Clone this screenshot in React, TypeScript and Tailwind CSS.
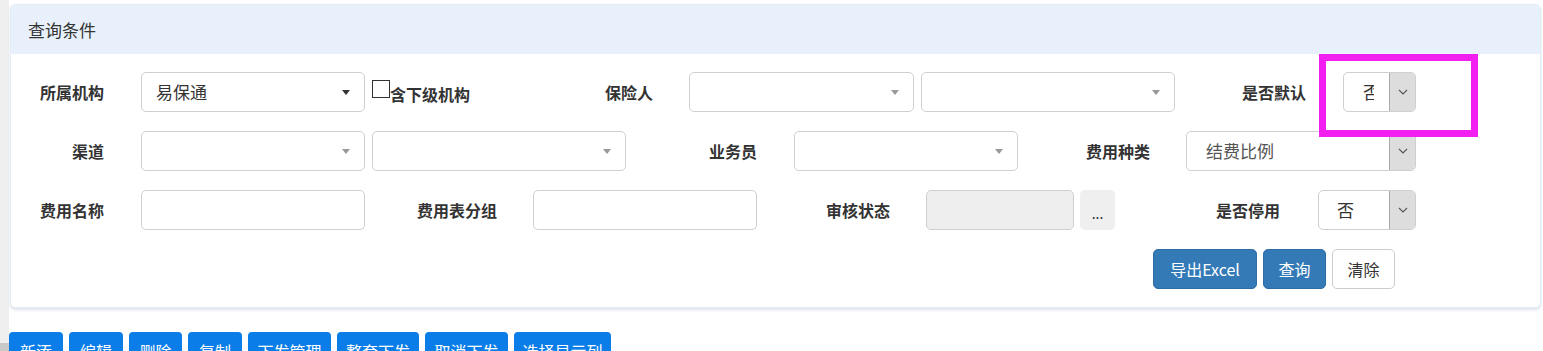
const font = {fontFamily: '"Noto Sans CJK SC", "Liberation Sans", sans-serif'};

const Label = ({text, w}: { text: string; w: string }) => (
    <div className={`${w} shrink-0 text-right text-[16px] font-bold text-[#333]`}>{text}</div>
);

// select2 style box with little triangle
const Select2 = ({w, value, ml, dark}: { w: string; value?: string; ml: string; dark?: boolean }) => (
    <div
        className={`${w} ${ml} shrink-0 h-[40px] flex items-center justify-between border border-[#cfcfcf] rounded-[5px] bg-white pl-[14px] pr-[14px]`}>
        <span className="text-[17px] text-[#333]">{value}</span>
        <span
            className={`w-0 h-0 border-l-[4px] border-r-[4px] border-t-[5px] border-l-transparent border-r-transparent ${dark ? "border-t-[#333]" : "border-t-[#999]"}`}/>
    </div>
);

const Chevron = () => (
    <svg width="10" height="6" viewBox="0 0 10 6" fill="none">
        <polyline points="1,1 5,5 9,1" stroke="#555" strokeWidth="1.1"/>
    </svg>
);

// native select look with grey arrow area
const NativeSelect = ({w, value, ml, pl, clip, color}: {
    w: string;
    value: string;
    ml: string;
    pl: string;
    clip?: boolean;
    color?: string
}) => (
    <div
        className={`${w} ${ml} shrink-0 h-[40px] flex border border-[#cfcfcf] rounded-[5px] bg-white overflow-hidden`}>
        <div className={`flex-1 flex items-center ${pl}`}>
            <span
                className={`text-[17px] ${color ?? "text-[#333]"} ${clip ? "w-[11px] overflow-hidden whitespace-nowrap" : ""}`}>
                {value}
            </span>
        </div>
        <div className="w-[26px] h-full bg-[#dddddd] border-l border-[#aaaaaa] flex items-center justify-center">
            <Chevron/>
        </div>
    </div>
);

const TextInput = ({w, ml, disabled}: { w: string; ml: string; disabled?: boolean }) => (
    <div
        className={`${w} ${ml} shrink-0 h-[40px] border border-[#cfcfcf] rounded-[5px] ${disabled ? "bg-[#eeeeee]" : "bg-white"}`}/>
);

const toolbarBtns = [
    {label: "新添", w: "w-[54px]"},
    {label: "编辑", w: "w-[54px]"},
    {label: "删除", w: "w-[53px]"},
    {label: "复制", w: "w-[54px]"},
    {label: "下发管理", w: "w-[83px]"},
    {label: "整套下发", w: "w-[82px]"},
    {label: "取消下发", w: "w-[83px]"},
    {label: "选择显示列", w: "w-[97px]"},
];

export default function App() {
    return (
        <div className="relative flex h-[351px] w-full overflow-hidden bg-white" style={font}>
            {/* left grey strip */}
            <div className="w-[9px] shrink-0 bg-[#efefef] flex flex-col justify-end">
                <div className="h-[8px] bg-[#c9c9c9]"/>
            </div>

            <div className="flex-1 pt-[4px]">
                {/* search panel */}
                <div
                    className="ml-[1px] mr-[2px] rounded-[5px] border border-[#e3ebf3] bg-white shadow-[0_2px_3px_rgba(200,210,225,0.6)] overflow-hidden">
                    <div className="h-[49px] bg-[#e8f1fb] flex items-center pl-[17px]">
                        <span className="text-[17px] text-[#333]">查询条件</span>
                    </div>

                    <div className="pt-[18px] pb-[18px] flex flex-col gap-[19px]">
                        {/* row 1 */}
                        <div className="flex items-center h-[40px]">
                            <Label text="所属机构" w="w-[93px]"/>
                            <Select2 w="w-[224px]" ml="ml-[37px]" value="易保通" dark/>
                            <div className="ml-[7px] w-[103px] shrink-0 flex items-start h-[24px]">
                                <span className="w-[18px] h-[18px] border border-[#333] bg-white shrink-0"/>
                                <span className="text-[16px] font-bold text-[#333] leading-none pt-[6px]">含下级机构</span>
                            </div>
                            <Label text="保险人" w="w-[178px]"/>
                            <Select2 w="w-[225px]" ml="ml-[36px]"/>
                            <Select2 w="w-[254px]" ml="ml-[7px]"/>
                            <Label text="是否默认" w="w-[131px]"/>
                            <NativeSelect w="w-[73px]" ml="ml-[37px]" value="否" pl="pl-[19px]" clip/>
                        </div>

                        {/* row 2 */}
                        <div className="flex items-center h-[40px]">
                            <Label text="渠道" w="w-[93px]"/>
                            <Select2 w="w-[224px]" ml="ml-[37px]"/>
                            <Select2 w="w-[254px]" ml="ml-[7px]"/>
                            <Label text="业务员" w="w-[131px]"/>
                            <Select2 w="w-[224px]" ml="ml-[37px]"/>
                            <Label text="费用种类" w="w-[132px]"/>
                            <NativeSelect w="w-[230px]" ml="ml-[36px]" value="结费比例" pl="pl-[19px]"
                                          color="text-[#555]"/>
                        </div>

                        {/* row 3 */}
                        <div className="flex items-center h-[40px]">
                            <Label text="费用名称" w="w-[93px]"/>
                            <TextInput w="w-[224px]" ml="ml-[37px]"/>
                            <Label text="费用表分组" w="w-[132px]"/>
                            <TextInput w="w-[224px]" ml="ml-[36px]"/>
                            <Label text="审核状态" w="w-[133px]"/>
                            <TextInput w="w-[148px]" ml="ml-[36px]" disabled/>
                            <button
                                className="ml-[6px] w-[35px] h-[40px] shrink-0 rounded-[5px] bg-[#efefef] text-[14px] text-[#333] leading-none pt-[6px]">
                                ...
                            </button>
                            <Label text="是否停用" w="w-[165px]"/>
                            <NativeSelect w="w-[98px]" ml="ml-[38px]" value="否" pl="pl-[18px]"/>
                        </div>

                        {/* row 4 */}
                        <div className="flex items-center h-[40px] pl-[1142px] gap-[6px]">
                            <button
                                className="w-[104px] h-[40px] rounded-[5px] bg-[#337ab7] border border-[#2e6da4] text-white text-[16px]">
                                导出Excel
                            </button>
                            <button
                                className="w-[63px] h-[40px] rounded-[5px] bg-[#337ab7] border border-[#2e6da4] text-white text-[16px]">
                                查询
                            </button>
                            <button
                                className="w-[63px] h-[40px] rounded-[5px] bg-white border border-[#cccccc] text-[#333] text-[16px]">
                                清除
                            </button>
                        </div>
                    </div>
                </div>

                {/* toolbar */}
                <div className="mt-[24px] flex gap-[6px]">
                    {toolbarBtns.map((b) => (
                        <button key={b.label}
                                className={`${b.w} h-[34px] shrink-0 rounded-[4px] bg-[#0a7de8] text-white text-[16px] pt-[4px]`}>
                            {b.label}
                        </button>
                    ))}
                </div>
            </div>

            {/* annotation frame */}
            <div className="absolute left-[1319px] top-[54px] w-[159px] h-[83px] border-[7px] border-[#f21ff0]"/>
        </div>
    );
}
